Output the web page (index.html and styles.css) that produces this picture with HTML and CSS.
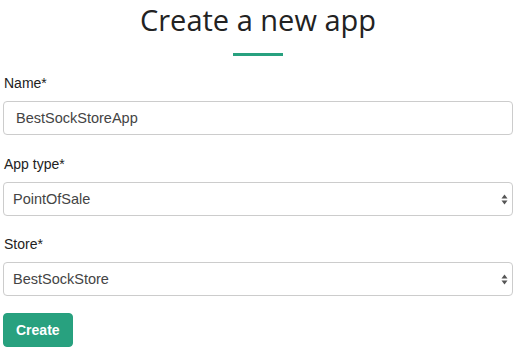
FILE: index.html
```html
<!DOCTYPE html>
<html>
<head>
<meta charset="utf-8">
<link rel="stylesheet" href="styles.css">
</head>
<body>
<div class="page">
  <h1 class="title">Create a new app</h1>
  <div class="rule"></div>
  <form class="form">
    <div class="group">
      <label class="label">Name*</label>
      <input class="control" type="text" value="BestSockStoreApp">
    </div>
    <div class="group">
      <label class="label">App type*</label>
      <div class="select-wrap">
        <select class="control select"><option>PointOfSale</option></select>
        <svg class="arrows" width="7" height="11" viewBox="0 0 7 11"><path d="M3.5 0.5 L6.5 4.5 L0.5 4.5 Z M0.5 6.5 L6.5 6.5 L3.5 10.5 Z" fill="#555"/></svg>
      </div>
    </div>
    <div class="group">
      <label class="label">Store*</label>
      <div class="select-wrap">
        <select class="control select"><option>BestSockStore</option></select>
        <svg class="arrows" width="7" height="11" viewBox="0 0 7 11"><path d="M3.5 0.5 L6.5 4.5 L0.5 4.5 Z M0.5 6.5 L6.5 6.5 L3.5 10.5 Z" fill="#555"/></svg>
      </div>
    </div>
    <div class="actions">
      <button class="btn" type="button">Create</button>
    </div>
  </form>
</div>
</body>
</html>
```
FILE: styles.css
```css
html, body {
  margin: 0;
  padding: 0;
  background: #fff;
}
.page {
  padding: 0 4px 0 3px;
  font-family: "Liberation Sans", Arial, sans-serif;
  font-size: 14px;
  color: #333;
}
.title {
  margin: 0;
  font-family: "Open Sans", sans-serif;
  font-weight: 400;
  font-size: 29px;
  line-height: 40px;
  color: #222;
  text-align: center;
}
.rule {
  width: 50px;
  height: 3px;
  margin: 13px auto 0;
  background: #28a17f;
}
.form {
  display: flex;
  flex-direction: column;
  margin-top: 17px;
}
.group {
  display: flex;
  flex-direction: column;
  margin-bottom: 18.5px;
}
.group:nth-last-child(2) {
  margin-bottom: 17px;
}
.label {
  display: block;
  line-height: 20px;
  margin: 0 0 8px 1px;
  color: #222;
}
.control {
  box-sizing: border-box;
  width: 100%;
  height: 34px;
  margin: 0;
  padding: 0 12px;
  border: 1px solid #ccc;
  border-radius: 4px;
  background: #fff;
  font-family: "Liberation Sans", Arial, sans-serif;
  font-size: 14.5px;
  color: #444;
  outline: none;
}
.select-wrap {
  position: relative;
}
.select {
  -webkit-appearance: none;
  appearance: none;
  padding-left: 9px;
}
.arrows {
  position: absolute;
  right: 5px;
  top: 12px;
  pointer-events: none;
}
.actions {
  display: flex;
}
.btn {
  height: 34px;
  padding: 0 12px;
  min-width: 69px;
  border: 1px solid #26a07e;
  border-radius: 4px;
  background: #28a17f;
  color: #fff;
  font-family: "Liberation Sans", Arial, sans-serif;
  font-size: 14px;
  font-weight: 700;
}
```
